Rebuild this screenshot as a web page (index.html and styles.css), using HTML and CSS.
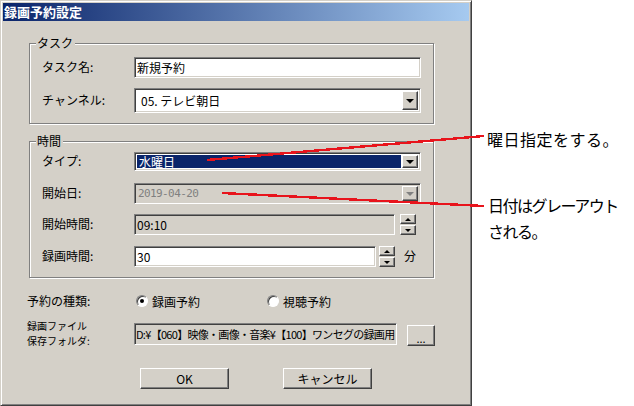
FILE: index.html
```html
<!DOCTYPE html>
<html lang="ja">
<head>
  <meta charset="UTF-8" />
  <title>録画予約設定</title>
  <link rel="stylesheet" href="styles.css">
</head>
<body>
  <div class="page">
    <div class="dialog">
      <div class="titlebar">録画予約設定</div>
      <div class="content">

        <div class="group group-task">
          <span class="legend">タスク</span>
          <div class="row row-name">
            <label>タスク名:</label>
            <div class="field w-full">新規予約</div>
          </div>
          <div class="row row-channel">
            <label>チャンネル:</label>
            <div class="field combo w-full">
              <span class="value pad">05. テレビ朝日</span>
              <span class="btn drop"><i class="tri"></i></span>
            </div>
          </div>
        </div>

        <div class="group group-time">
          <span class="legend">時間</span>
          <div class="row row-type">
            <label>タイプ:</label>
            <div class="field combo w-full">
              <span class="value selected">水曜日</span>
              <span class="btn drop"><i class="tri"></i></span>
            </div>
          </div>
          <div class="row row-date">
            <label>開始日:</label>
            <div class="field combo disabled w-full">
              <span class="value mono">2019-04-20</span>
              <span class="btn drop"><i class="tri grey"></i></span>
            </div>
          </div>
          <div class="row row-start">
            <label>開始時間:</label>
            <div class="field readonly w-start">09:10</div>
            <div class="spin">
              <span class="btn"><i class="tri-up"></i></span>
              <span class="btn"><i class="tri-sm"></i></span>
            </div>
          </div>
          <div class="row row-len">
            <label>録画時間:</label>
            <div class="field w-len">30</div>
            <div class="spin spin-len">
              <span class="btn"><i class="tri-up"></i></span>
              <span class="btn"><i class="tri-sm"></i></span>
            </div>
            <span class="unit">分</span>
          </div>
        </div>

        <div class="outer">
          <div class="row row-kind">
            <label>予約の種類:</label>
            <div class="radios">
              <span class="radio checked"></span><span class="radio-text">録画予約</span>
              <span class="radio second"></span><span class="radio-text">視聴予約</span>
            </div>
          </div>
          <div class="row row-path">
            <label class="two-line">録画ファイル<br>保存フォルダ:</label>
            <div class="field readonly path">D:¥【060】映像・画像・音楽¥【100】ワンセグの録画用</div>
            <span class="btn push browse">...</span>
          </div>
          <div class="actions">
            <span class="btn push ok">OK</span>
            <span class="btn push cancel">キャンセル</span>
          </div>
        </div>

      </div>
    </div>

    <div class="note note-day">曜日指定をする。</div>
    <div class="note note-date">日付はグレーアウト<br>される。</div>

    <svg class="callouts" viewBox="0 0 634 406" width="634" height="406">
      <line x1="207" y1="160" x2="484" y2="136" stroke="#e8141c" stroke-width="2.4" />
      <line x1="222" y1="193" x2="484" y2="206" stroke="#e8141c" stroke-width="2.4" />
    </svg>
  </div>
</body>
</html>
```

FILE: styles.css
```css
body {
  margin: 0;
  background: #fff;
  font-family: "Noto Sans CJK JP", sans-serif;
  font-size: 12px;
  color: #000;
}
.page {
  position: relative;
  width: 634px;
  height: 406px;
  overflow: hidden;
}
.dialog {
  box-sizing: border-box;
  width: 472px;
  height: 406px;
  background: #d4d0c8;
  border: 1px solid;
  border-color: #d4d0c8 #404040 #404040 #d4d0c8;
  box-shadow: inset 1px 1px 0 #fff, inset -1px -1px 0 #808080;
  padding: 2px;
}
.titlebar {
  height: 18px;
  line-height: 18px;
  padding-left: 1px;
  background: linear-gradient(to right, #0a246a, #a6caf0);
  color: #fff;
  font-weight: bold;
  font-size: 13px;
}
.content {
  padding-left: 24px;
}

/* group boxes */
.group {
  position: relative;
  box-sizing: border-box;
  width: 405px;
  margin-left: 2px;
  border: 1px solid #808080;
  box-shadow: 1px 1px 0 #fff, inset 1px 1px 0 #fff;
  padding-left: 12px;
}
.legend {
  position: absolute;
  top: -9px;
  left: 6px;
  padding: 0 2px 0 1px;
  background: #d4d0c8;
  line-height: 16px;
}
.group-task {
  margin-top: 22px;
  height: 81px;
  padding-top: 13px;
}
.group-time {
  margin-top: 17px;
  height: 137px;
  padding-top: 10px;
}

.row {
  display: flex;
  align-items: center;
}
.row label {
  width: 92px;
  flex: none;
  padding-bottom: 2px;
}
.row-name { height: 21px; }
.row-channel { height: 25px; margin-top: 10px; }
.row-type { height: 19px; }
.row-date { height: 21px; margin-top: 12px; }
.row-start { height: 21px; margin-top: 10px; }
.row-len { height: 21px; margin-top: 11px; }

/* sunken fields */
.field {
  box-sizing: border-box;
  height: 100%;
  display: flex;
  align-items: center;
  background: #fff;
  border: 1px solid;
  border-color: #808080 #fff #fff #808080;
  box-shadow: inset 1px 1px 0 #404040, inset -1px -1px 0 #d4d0c8;
  padding: 0 2px;
  white-space: nowrap;
  overflow: hidden;
}
.w-full { width: 287px; }
.w-start { width: 261px; }
.w-len { width: 242px; }
.readonly,
.disabled {
  background: #d4d0c8;
}
.combo {
  padding: 2px;
  align-items: stretch;
}
.combo .value {
  flex: 1;
  display: flex;
  align-items: center;
  padding-left: 1px;
}
.combo .value.pad {
  padding-left: 4px;
}
.combo .value.selected {
  background: #0a246a;
  color: #fff;
  margin: 0 1px 0 0;
  padding-left: 2px;
}
.mono {
  color: #808080;
  font-family: "DejaVu Sans Mono", monospace;
  font-size: 11px;
  letter-spacing: -0.6px;
}

/* raised buttons */
.btn {
  box-sizing: border-box;
  display: flex;
  align-items: center;
  justify-content: center;
  background: #d4d0c8;
  border: 1px solid;
  border-color: #fff #404040 #404040 #fff;
  box-shadow: inset -1px -1px 0 #808080;
}
.drop {
  width: 16px;
  flex: none;
}
.tri {
  width: 0;
  height: 0;
  border-left: 4px solid transparent;
  border-right: 4px solid transparent;
  border-top: 4px solid #000;
  margin-top: 1px;
}
.tri.grey {
  border-top-color: #808080;
}
.spin {
  display: flex;
  flex-direction: column;
  gap: 1px;
  margin-left: 5px;
  height: 21px;
}
.spin-len {
  margin-left: 3px;
}
.spin .btn {
  width: 16px;
  height: 10px;
}
.tri-up,
.tri-sm {
  width: 0;
  height: 0;
  border-left: 3px solid transparent;
  border-right: 3px solid transparent;
}
.tri-up { border-bottom: 3px solid #000; }
.tri-sm { border-top: 3px solid #000; }
.unit {
  margin-left: 9px;
  padding-bottom: 2px;
}

/* lower part */
.outer .row label {
  width: 107px;
}
.row-kind {
  height: 14px;
  margin-top: 16px;
}
.radios {
  display: flex;
  align-items: center;
  padding-left: 2px;
}
.radio {
  box-sizing: border-box;
  width: 12px;
  height: 12px;
  border-radius: 50%;
  background: #fff;
  border: 1px solid;
  border-color: #808080 #fff #fff #808080;
  box-shadow: inset 1px 1px 0 #404040;
  display: flex;
  align-items: center;
  justify-content: center;
}
.radio.checked::after {
  content: "";
  width: 4px;
  height: 4px;
  border-radius: 50%;
  background: #000;
}
.radio-text {
  margin-left: 4px;
}
.radio.second {
  margin-left: 67px;
}
.row-path {
  height: 22px;
  margin-top: 15px;
}
.outer .two-line {
  font-size: 10px;
  line-height: 15px;
  padding-bottom: 0;
  margin-top: -2px;
}
.path {
  width: 263px;
  font-size: 11px;
  letter-spacing: -0.7px;
  padding-left: 1px;
}
.browse {
  width: 28px;
  height: 21px;
  margin-left: 10px;
  margin-top: 2px;
  font-size: 11px;
  align-items: flex-end;
  padding-bottom: 4px;
  line-height: 6px;
}
.actions {
  display: flex;
  gap: 54px;
  margin-top: 23px;
  padding-left: 113px;
}
.push {
  height: 21px;
}
.ok,
.cancel {
  width: 89px;
}

/* callouts on the canvas */
.note {
  position: absolute;
  font-size: 16px;
  line-height: 26px;
  white-space: nowrap;
}
.note-day {
  left: 487px;
  top: 126px;
  letter-spacing: 0.5px;
}
.note-date {
  left: 488px;
  top: 192px;
  letter-spacing: -1.5px;
}
.callouts {
  position: absolute;
  left: 0;
  top: 0;
  pointer-events: none;
  shape-rendering: crispEdges;
}
```
